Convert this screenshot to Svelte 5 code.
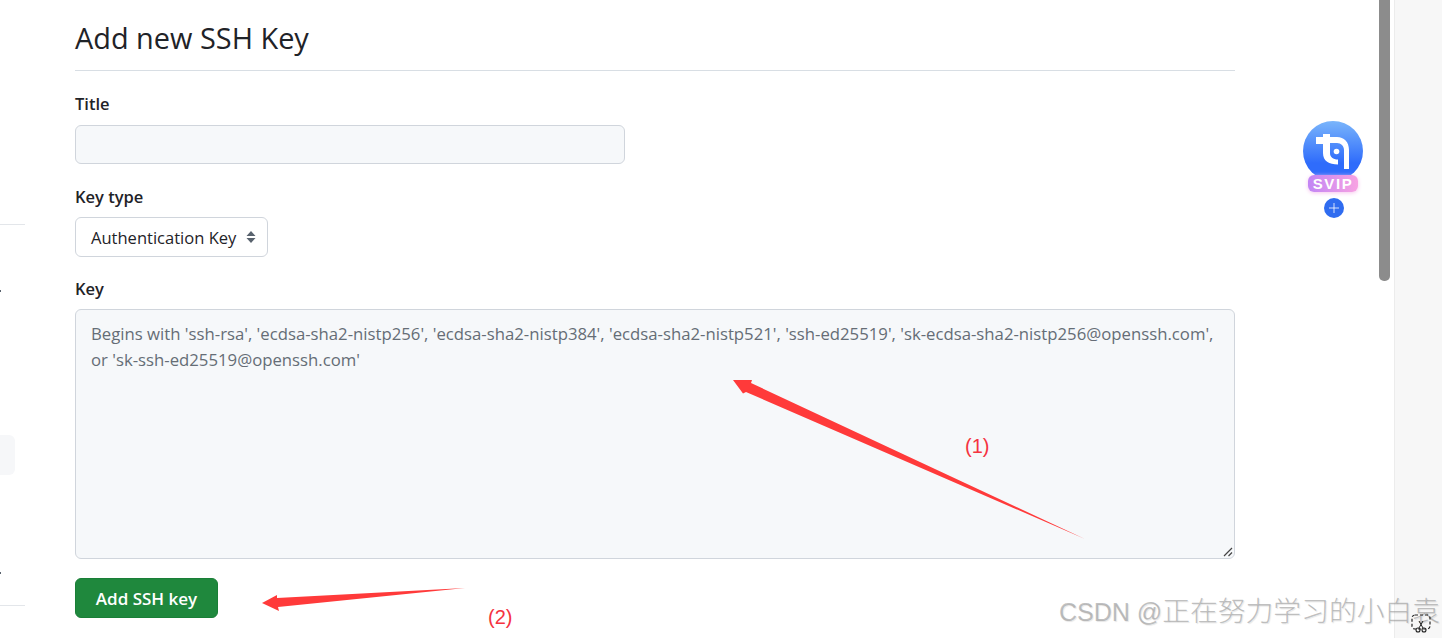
<script>
    const placeholder =
        "Begins with 'ssh-rsa', 'ecdsa-sha2-nistp256', 'ecdsa-sha2-nistp384', 'ecdsa-sha2-nistp521', 'ssh-ed25519', 'sk-ecdsa-sha2-nistp256@openssh.com', or 'sk-ssh-ed25519@openssh.com'";
</script>

<div class="page">
    <aside class="sidebar">
        <div class="rule first"></div>
        <div class="dot one"></div>
        <div class="pill"></div>
        <div class="dot two"></div>
        <div class="rule last"></div>
    </aside>

    <main class="content">
        <h2 class="heading">Add new SSH Key</h2>

        <label class="label title-label" for="title">Title</label>
        <div class="input" id="title"></div>

        <label class="label type-label" for="type">Key type</label>
        <div class="select" id="type">
            <span>Authentication Key</span>
            <svg width="10" height="14" viewBox="0 0 10 14">
                <path d="M5 1 L9.5 6 H0.5 Z M5 13 L0.5 8 H9.5 Z" fill="#59636e" />
            </svg>
        </div>

        <label class="label key-label" for="key">Key</label>
        <div class="textarea" id="key">
            <p>{placeholder}</p>
            <svg class="grip" width="10" height="10" viewBox="0 0 10 10">
                <path d="M1 9 L9 1 M5.5 9 L9 5.5" stroke="#444" stroke-width="1.2" fill="none" />
            </svg>
        </div>

        <button class="submit">Add SSH key</button>
    </main>

    <div class="track">
        <div class="thumb"></div>
    </div>
    <div class="gutter"></div>

    <!-- screenshot annotations on top of the page -->
    <svg class="arrows" width="1442" height="638" viewBox="0 0 1442 638">
        <path d="M733 380 L752 380 L751 383 L1085 539 L746 392 L743 393.5 Z" fill="#ff3a3a" />
        <path d="M262 603 L277 595 L277 598 L465 588 L278 607 L279 611 Z" fill="#ff3a3a" />
    </svg>
    <span class="note n1">(1)</span>
    <span class="note n2">(2)</span>

    <div class="badge">
        <div class="logo">
            <svg width="60" height="60" viewBox="0 0 60 60">
                <defs>
                    <linearGradient id="sky" x1="0" y1="0" x2="0" y2="1">
                        <stop offset="0" stop-color="#7ab5fb" />
                        <stop offset="0.7" stop-color="#2f6cfb" />
                    </linearGradient>
                </defs>
                <circle cx="30" cy="30" r="30" fill="url(#sky)" />
                <path d="M13 16 H20 V13 H27 V16 H34 C41 16 46 21 46 29 V48 H41 V29 C41 25 38 22 34 22 H27 V32 C27 36 30 38.5 35 38.5 V43.5 C26 43.5 20 40 20 32 V23 H13 Z" fill="#fff" />
                <circle cx="33.5" cy="30.5" r="2.8" fill="#fff" />
            </svg>
        </div>
        <div class="svip">SVIP</div>
        <div class="plus">
            <svg width="20" height="20" viewBox="0 0 20 20">
                <circle cx="10" cy="10" r="10" fill="#2f6cf0" />
                <path d="M5 10 H15 M10 5 V15" stroke="#fff" stroke-width="0.8" />
            </svg>
        </div>
    </div>

    <div class="watermark">CSDN @<span class="cjk">正在努力学习的小白袁</span></div>

    <svg class="scissors" width="20" height="20" viewBox="0 0 20 20">
        <rect x="1" y="1" width="18" height="14" rx="3" fill="none" stroke="#222" stroke-width="1.2" stroke-dasharray="3 2" />
        <circle cx="7" cy="16" r="2" fill="none" stroke="#222" stroke-width="1.1" />
        <circle cx="13" cy="16" r="2" fill="none" stroke="#222" stroke-width="1.1" />
        <path d="M8 14 L12 7 M12 14 L8 7" stroke="#222" stroke-width="1" />
    </svg>
</div>

<style>
    :global(body) {
        margin: 0;
        background: #fff;
        overflow: hidden;
    }
    .page {
        position: relative;
        display: flex;
        width: 1442px;
        height: 638px;
        overflow: hidden;
        font-family: "Open Sans", "Noto Sans", sans-serif;
        color: #1f2328;
    }

    .sidebar {
        position: relative;
        flex: 0 0 25px;
    }
    .rule {
        position: absolute;
        left: 0;
        width: 25px;
        height: 1px;
        background: #e3e6ea;
    }
    .first { top: 224px; }
    .last { top: 605px; }
    .pill {
        position: absolute;
        top: 435px;
        left: -10px;
        width: 25px;
        height: 40px;
        border-radius: 6px;
        background: #f6f7f9;
    }
    .dot {
        position: absolute;
        left: 0;
        width: 1px;
        height: 2px;
        background: #59636e;
    }
    .one { top: 290px; }
    .two { top: 572px; }

    .content {
        flex: 0 0 1160px;
        margin-left: 50px;
        display: flex;
        flex-direction: column;
        align-items: flex-start;
    }
    .heading {
        width: 100%;
        margin: 0;
        box-sizing: content-box;
        padding-top: 19px;
        height: 51px;
        border-bottom: 1px solid #d8dee4;
        font-size: 28.9px;
        font-weight: 400;
        line-height: 38px;
    }
    .label {
        font-size: 16.5px;
        font-weight: 600;
        line-height: 22px;
    }
    .title-label { margin-top: 22px; }
    .type-label { margin-top: 22px; }
    .key-label { margin-top: 21px; }

    .input {
        width: 550px;
        height: 39px;
        margin-top: 10px;
        box-sizing: border-box;
        border: 1px solid #d0d5dc;
        border-radius: 6px;
        background: #f6f8fa;
    }
    .select {
        display: flex;
        align-items: center;
        justify-content: space-between;
        width: 193px;
        height: 40px;
        margin-top: 9px;
        padding: 0 11px 0 15px;
        box-sizing: border-box;
        border: 1px solid #d0d5dc;
        border-radius: 6px;
        font-size: 16.55px;
    }
    .textarea {
        position: relative;
        width: 100%;
        height: 250px;
        margin-top: 9px;
        padding: 11px 15px;
        box-sizing: border-box;
        border: 1px solid #d0d5dc;
        border-radius: 6px;
        background: #f6f8fa;
        color: #656d76;
        font-size: 16.74px;
        line-height: 26px;
    }
    .textarea p {
        margin: 0;
    }
    .grip {
        position: absolute;
        right: 1px;
        bottom: 1px;
    }
    .submit {
        width: 143px;
        height: 40px;
        margin-top: 19px;
        padding: 0;
        border: 1px solid #1a7f37;
        border-radius: 6px;
        background: #1f883d;
        color: #fff;
        font-family: inherit;
        font-size: 17px;
        font-weight: 600;
    }

    .track {
        position: relative;
        flex: 0 0 11px;
        margin-left: 144px;
    }
    .thumb {
        width: 11px;
        height: 281px;
        border-radius: 0 0 5px 5px;
        background: #8c8c8c;
    }
    .gutter {
        flex: 1;
        margin-left: 4px;
        border-left: 1px solid #ececec;
        background: #f7f7f7;
    }

    .arrows {
        position: absolute;
        top: 0;
        left: 0;
    }
    .note {
        position: absolute;
        color: #f5333f;
        font-family: "Liberation Sans", sans-serif;
        font-size: 20px;
        line-height: 24px;
    }
    .n1 { left: 965px; top: 434px; }
    .n2 { left: 488px; top: 605px; }

    .badge {
        position: absolute;
        top: 121px;
        left: 1303px;
        width: 60px;
        display: flex;
        flex-direction: column;
        align-items: center;
    }
    .logo {
        height: 60px;
    }
    .svip {
        width: 50px;
        height: 17px;
        margin-top: -6px;
        border-radius: 6px;
        background: linear-gradient(90deg, #c285f5, #f8a2e2);
        box-shadow: 0 1px 4px #f7c6ee;
        color: #fff;
        font-family: "Liberation Sans", sans-serif;
        font-size: 15px;
        font-weight: 700;
        letter-spacing: 1.6px;
        line-height: 17px;
        text-align: center;
    }
    .plus {
        height: 20px;
        margin-top: 6px;
        margin-left: 2px;
    }

    .watermark {
        position: absolute;
        top: 596px;
        left: 1059px;
        color: rgba(140, 140, 140, 0.55);
        font-family: "Liberation Sans", "Noto Sans CJK SC", sans-serif;
        font-size: 25px;
        line-height: 32px;
        white-space: nowrap;
        text-shadow: 1px 1px 1px rgba(0, 0, 0, 0.1);
    }
    .cjk {
        font-size: 27.8px;
        font-weight: 300;
    }
    .scissors {
        position: absolute;
        top: 614px;
        left: 1411px;
    }
</style>
